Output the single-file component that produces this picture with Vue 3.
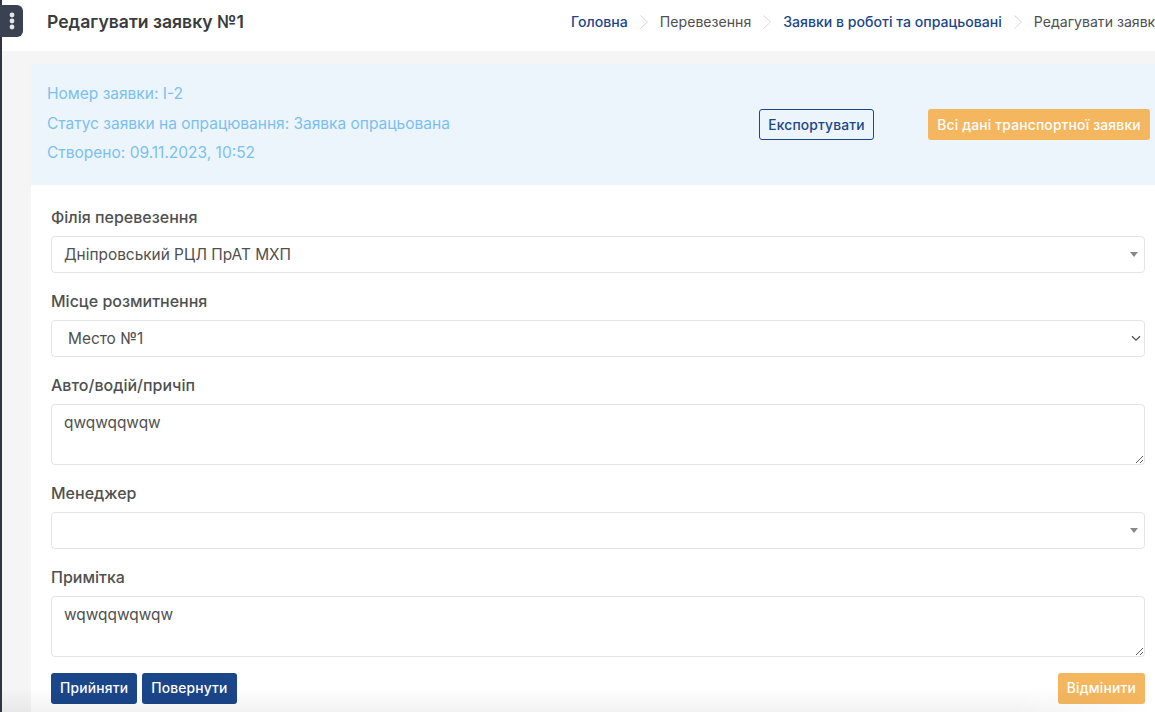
<template>
  <div class="page">
    <aside class="rail"></aside>
    <button class="rail-toggle" type="button">
      <svg width="6" height="18" viewBox="0 0 6 18"><circle cx="3" cy="3" r="2.4" /><circle cx="3" cy="9" r="2.4" /><circle cx="3" cy="15" r="2.4" /></svg>
    </button>

    <header class="topbar">
      <h1>Редагувати заявку №1</h1>
      <nav class="crumbs">
        <template v-for="(c, i) in crumbs" :key="c.text">
          <svg v-if="i" class="sep" width="10" height="16" viewBox="0 0 10 16"><path d="M1.5 1.5 8.5 8l-7 6.5" /></svg>
          <span :class="{ link: c.link }">{{ c.text }}</span>
        </template>
      </nav>
    </header>

    <main class="content">
      <section class="info">
        <div class="info-text">
          <p>Номер заявки: І-2</p>
          <p>Статус заявки на опрацювання: Заявка опрацьована</p>
          <p>Створено: 09.11.2023, 10:52</p>
        </div>
        <button class="btn outline" type="button">Експортувати</button>
        <button class="btn orange wide" type="button">Всі дані транспортної заявки</button>
      </section>

      <form class="card" @submit.prevent>
        <label>Філія перевезення</label>
        <div class="field combo">
          <span>Дніпровський РЦЛ ПрАТ МХП</span>
          <i class="caret"></i>
        </div>

        <label>Місце розмитнення</label>
        <div class="field plain">
          <span>Место №1</span>
          <svg class="chev" width="10" height="7" viewBox="0 0 10 7"><path d="M1 1.2 5 5.2l4-4" /></svg>
        </div>

        <label>Авто/водій/причіп</label>
        <textarea v-model="vehicle"></textarea>

        <label>Менеджер</label>
        <div class="field combo">
          <span></span>
          <i class="caret"></i>
        </div>

        <label>Примітка</label>
        <textarea v-model="note" class="note"></textarea>

        <div class="actions">
          <button class="btn blue" type="button">Прийняти</button>
          <button class="btn blue" type="button">Повернути</button>
          <button class="btn orange push" type="button">Відмінити</button>
        </div>
      </form>
    </main>

    <div class="fade"></div>
  </div>
</template>

<script setup>
import { ref } from 'vue'

const crumbs = [
  { text: 'Головна', link: true },
  { text: 'Перевезення' },
  { text: 'Заявки в роботі та опрацьовані', link: true },
  { text: 'Редагувати заявку №1' }
]

const vehicle = ref('qwqwqqwqw')
const note = ref('wqwqqwqwqw')
</script>

<style>
html, body {
  margin: 0;
  height: 100%;
  overflow: hidden;
  background: #f5f5f5;
}
</style>

<style scoped>
.page {
  position: relative;
  height: 712px;
  width: 1155px;
  overflow: hidden;
  font-family: Inter, "Liberation Sans", sans-serif;
  color: #4f5050;
}
.rail {
  position: absolute;
  left: 0;
  top: 0;
  bottom: 0;
  width: 1.5px;
  background: #2f3542;
  z-index: 3;
}
.rail-toggle {
  position: absolute;
  left: 0;
  top: 5px;
  width: 23px;
  height: 32px;
  padding: 0;
  border: 0;
  border-radius: 0 6px 6px 0;
  background: #3a4150;
  display: flex;
  align-items: center;
  justify-content: center;
  z-index: 4;
}
.rail-toggle circle {
  fill: #e4e6ea;
}
.topbar {
  height: 51px;
  background: #fff;
  display: flex;
  align-items: center;
  padding-left: 47px;
  padding-bottom: 8px;
  box-sizing: border-box;
  white-space: nowrap;
  overflow: hidden;
}
h1 {
  margin: 0;
  width: 524px;
  flex: none;
  font-size: 17.6px;
  font-weight: 600;
  color: #3a3b3c;
}
.crumbs {
  display: flex;
  align-items: center;
  gap: 11px;
  font-size: 14.1px;
}
.crumbs .link {
  color: #1b4689;
  font-weight: 500;
}
.sep {
  fill: none;
  stroke: #d5d8dc;
  stroke-width: 1;
}
.content {
  padding: 13px 0 0 31px;
}
.info {
  height: 121px;
  box-sizing: border-box;
  background: #ecf5fc;
  padding-left: 16px;
  padding-right: 5px;
  display: flex;
  align-items: center;
}
.info-text {
  flex: 1;
  color: #7cc0f0;
  font-size: 15.5px;
  padding-bottom: 2.5px;
}
.info-text p {
  margin: 0;
  line-height: 29.5px;
}
.btn {
  font: 500 13.8px Inter, "Liberation Sans", sans-serif;
  height: 31px;
  padding: 0 8px;
  border-radius: 3px;
  border: 1px solid transparent;
  letter-spacing: 0.2px;
  white-space: nowrap;
}
.outline {
  width: 115px;
  background: transparent;
  color: #1b4689;
  border-color: #1b4689;
}
.orange {
  background: #f4b65f;
  color: #fff;
}
.wide {
  width: 222px;
  margin-left: 54px;
}
.blue {
  background: #1b4689;
  color: #fff;
}
.card {
  background: #fff;
  padding: 21.5px 10px 0 20px;
  height: 540px;
  box-sizing: border-box;
  display: flex;
  flex-direction: column;
}
label {
  font-size: 16px;
  font-weight: 500;
  color: #4f5050;
  line-height: 20px;
  margin-bottom: 9px;
}
.field, textarea {
  box-sizing: border-box;
  width: 100%;
  border: 1px solid #e2e4e6;
  border-radius: 4px;
  background: #fff;
  font: 400 15.4px Inter, "Liberation Sans", sans-serif;
  color: #4f5050;
}
.field {
  height: 37.5px;
  flex: none;
  display: flex;
  align-items: center;
  justify-content: space-between;
  margin-bottom: 17.5px;
}
.combo {
  padding: 0 6px 0 12px;
}
.plain {
  padding: 0 3px 0 16px;
}
.caret {
  width: 0;
  height: 0;
  border-left: 4px solid transparent;
  border-right: 4px solid transparent;
  border-top: 5px solid #888;
}
.chev {
  fill: none;
  stroke: #4f5050;
  stroke-width: 1.3;
}
textarea {
  display: block;
  height: 61px;
  flex: none;
  padding: 8px 12px;
  margin-bottom: 18px;
  outline: none;
  resize: vertical;
}
textarea.note {
  margin-bottom: 16px;
}
.actions {
  display: flex;
  gap: 5px;
}
.push {
  margin-left: auto;
}
.fade {
  position: absolute;
  left: 0;
  right: 0;
  bottom: 0;
  height: 24px;
  background: linear-gradient(to bottom, rgba(0, 0, 0, 0), rgba(0, 0, 0, 0.05));
  -webkit-mask-image: linear-gradient(to right, #000 88%, transparent);
  mask-image: linear-gradient(to right, #000 88%, transparent);
  pointer-events: none;
  z-index: 2;
}
</style>
